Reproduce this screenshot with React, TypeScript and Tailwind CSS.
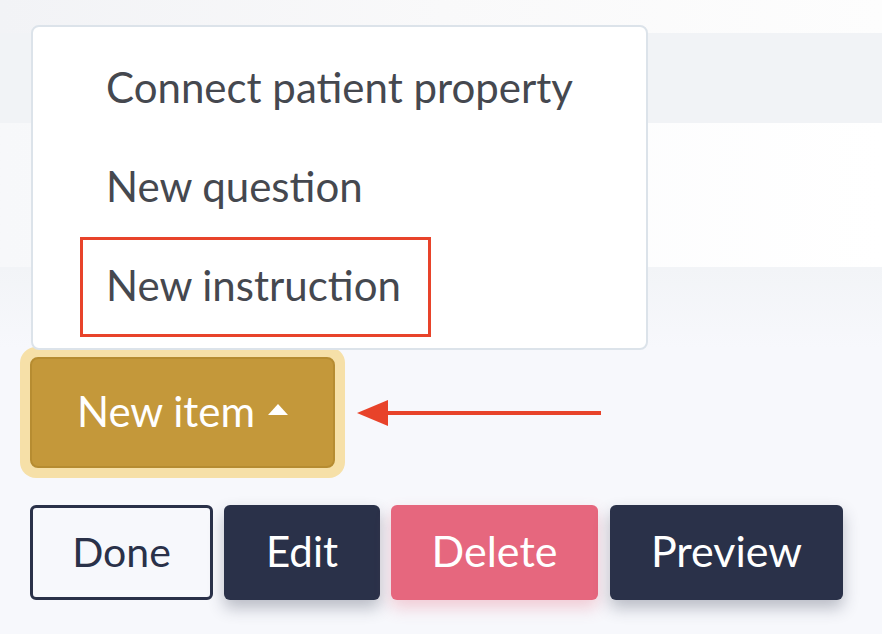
import React from "react";

const menuItems = ["Connect patient property", "New question"];

function Caret() {
  return (
    <svg width="20" height="11" viewBox="0 0 20 11" className="mt-[-4px]">
      <polygon points="10,0 20,11 0,11" fill="#ffffff" />
    </svg>
  );
}

function Arrow() {
  return (
    <svg width="244" height="28" viewBox="0 0 244 28">
      <polygon points="0,14 31,1 31,27" fill="#e8432a" />
      <rect x="30" y="12" width="214" height="4" fill="#e8432a" />
    </svg>
  );
}

export default function App() {
  return (
    <div className="relative h-[634px] w-[882px] overflow-hidden bg-[#f7f8fc] font-[Lato,sans-serif]">
      {/* table rows behind the menu */}
      <div className="flex h-[347px] flex-col">
        <div className="h-[33px] bg-gradient-to-r from-[#f2f3f6] via-[#f9f9fa] to-[#fdfdfd]" />
        <div className="h-[90px] bg-[#f1f3f6]" />
        <div className="h-[144px] bg-gradient-to-r from-[#f7f8fa] to-white" />
        <div className="flex-1 bg-gradient-to-b from-[#f2f4f7] to-[#f7f8fc]" />
      </div>

      {/* dropdown menu */}
      <div className="absolute left-[31px] top-[25px] w-[617px] rounded-[8px] border-2 border-[#dce3ea] bg-white py-[12px]">
        {menuItems.map((label) => (
          <div key={label} className="flex h-[99px] items-center pb-[3px] pl-[73px] text-[42px] text-[#45484f]">
            {label}
          </div>
        ))}
        <div className="flex h-[99px] items-center pl-[47px]">
          <div className="flex h-[100px] items-center border-[3px] border-[#e8432a] pb-[3px] pl-[23px] pr-[27px] text-[42px] text-[#45484f]">
            New instruction
          </div>
        </div>
      </div>

      {/* new item button */}
      <div className="flex items-center">
        <div className="ml-[20px] rounded-[16px] bg-[#f6e0a8] p-[10px]">
          <button className="flex h-[111px] w-[305px] items-center justify-center gap-[13px] rounded-[8px] border-2 border-[#b68c31] bg-[#c4983a] pb-[2px] text-[42px] text-white">
            New item
            <Caret />
          </button>
        </div>
        <div className="ml-[12px]">
          <Arrow />
        </div>
      </div>

      {/* action buttons */}
      <div className="ml-[30px] mt-[27px] flex items-center">
        <button className="h-[95px] w-[183px] rounded-[6px] border-[3px] border-[#2a3149] pb-[2px] text-[41px] text-[#2a3149]">
          Done
        </button>
        <button className="ml-[11px] h-[95px] w-[156px] rounded-[6px] bg-[#2a3149] pb-[2px] text-[42px] text-white shadow-[0_8px_16px_rgba(42,49,73,0.3)]">
          Edit
        </button>
        <button className="ml-[11px] h-[95px] w-[207px] rounded-[6px] bg-[#e6677e] pb-[2px] text-[43px] text-white shadow-[0_8px_16px_rgba(230,103,126,0.3)]">
          Delete
        </button>
        <button className="ml-[12px] h-[95px] w-[233px] rounded-[6px] bg-[#2a3149] pb-[2px] text-[43px] text-white shadow-[0_8px_16px_rgba(42,49,73,0.3)]">
          Preview
        </button>
      </div>
    </div>
  );
}
